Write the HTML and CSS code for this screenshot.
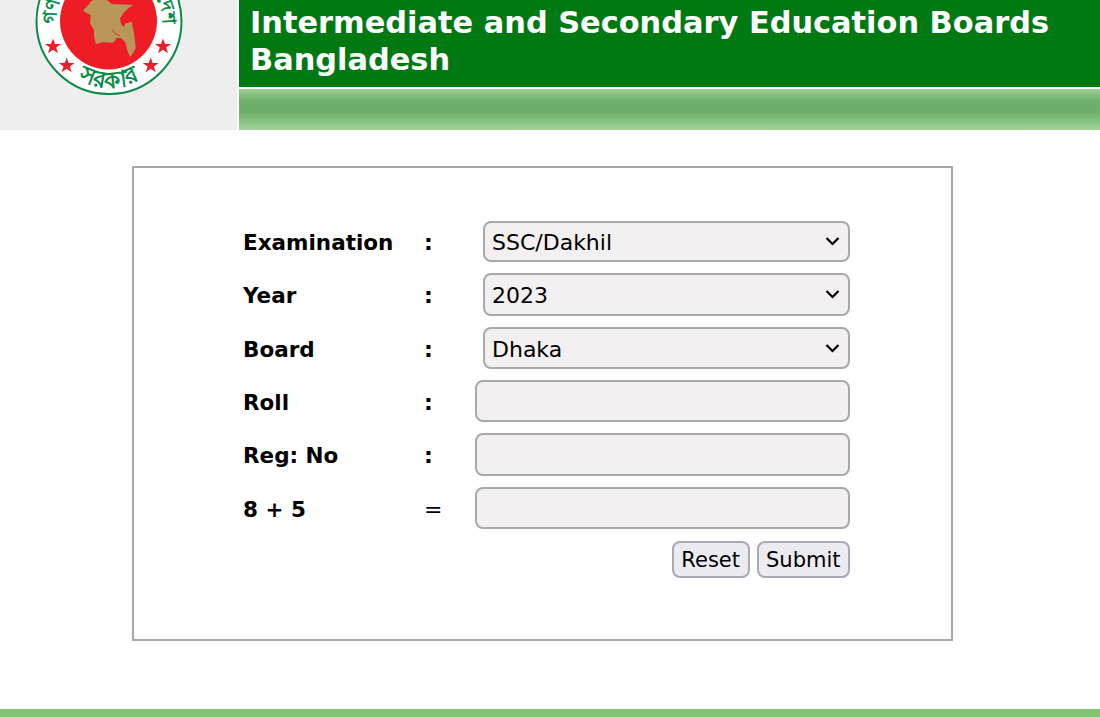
FILE: index.html
```html
<!DOCTYPE html>
<html lang="en">
<head>
<meta charset="utf-8">
<title>Education Board Results</title>
<link rel="stylesheet" href="styles.css">
</head>
<body>
<header class="masthead">
  <div class="brand">
    <svg class="logo" viewBox="0 0 148 96" width="148" height="96" aria-label="Government of Bangladesh seal">
      <circle cx="74" cy="21.500" r="72.500" fill="#fff" stroke="#0b8a4a" stroke-width="2"/>
      <circle cx="73.500" cy="21" r="48.500" fill="#ee1c25"/>
      <path fill="#b9975b" d="M48.300 10 L53.300 5 L55.700 1.700 L58 0 L71.700 0 L76.700 4 L98.300 5 L93.300 8.300 L88.300 13.300 L85 18.300 L86 24 L88.500 27 L91 23.300 L96.700 21.700 L99.300 35 L100.700 48.300 L96.700 55 L95 57 L92.300 50 L90 41.700 L86 38 L81.700 38 L78.300 42.700 L68.300 42.300 L61 44 L59 36.700 L59 30 L55 23.300 L55.700 15 L50 12.300 Z"/>
      <path class="seal-river" d="M76.700 29.300 L80 33.300 L85 36"/>
      <g fill="#e8202a">
        <polygon points="18,38.500 20,44.100 26,44.100 21.200,47.500 23,53.300 18,49.800 13,53.300 14.800,47.500 10,44.100 16,44.100"/>
        <polygon points="31.700,57.500 33.700,63.100 39.700,63.100 34.900,66.500 36.700,72.300 31.700,68.800 26.700,72.300 28.500,66.500 23.700,63.100 29.700,63.100"/>
        <polygon points="115.700,57.500 117.700,63.100 123.700,63.100 118.900,66.500 120.700,72.300 115.700,68.800 110.700,72.300 112.500,66.500 107.700,63.100 113.700,63.100"/>
        <polygon points="128,38.500 130,44.100 136,44.100 131.200,47.500 133,53.300 128,49.800 123,53.300 124.800,47.500 120,44.100 126,44.100"/>
      </g>
      <defs>
        <path id="arc-bottom" d="M30 70 A63 63 0 0 0 118 70"/>
        <path id="arc-top" d="M21 21.500 A53 53 0 1 1 127 21.500"/>
      </defs>
      <text class="seal-text seal-text-bottom"><textPath href="#arc-bottom" startOffset="50%" text-anchor="middle">সরকার</textPath></text>
      <text class="seal-text"><textPath href="#arc-top" startOffset="50%" text-anchor="middle">গণপ্রজাতন্ত্রী বাংলাদেশ</textPath></text>
    </svg>
  </div>
  <div class="banner">
    <h1 class="banner-title">Intermediate and Secondary Education Boards Bangladesh</h1>
    <div class="banner-strip"></div>
  </div>
</header>

<main class="content">
  <form class="result-form">
    <label class="field-label" for="exam">Examination</label>
    <span class="field-sep">:</span>
    <select class="field-select" id="exam"><option>SSC/Dakhil</option></select>

    <label class="field-label" for="year">Year</label>
    <span class="field-sep">:</span>
    <select class="field-select" id="year"><option>2023</option></select>

    <label class="field-label" for="board">Board</label>
    <span class="field-sep">:</span>
    <select class="field-select" id="board"><option>Dhaka</option></select>

    <label class="field-label" for="roll">Roll</label>
    <span class="field-sep">:</span>
    <input class="field-input" id="roll" type="text">

    <label class="field-label" for="reg">Reg: No</label>
    <span class="field-sep">:</span>
    <input class="field-input" id="reg" type="text">

    <label class="field-label" for="sum">8 + 5</label>
    <span class="field-sep field-sep-eq">=</span>
    <input class="field-input" id="sum" type="text">

    <div class="actions">
      <button class="action-btn" type="reset">Reset</button>
      <button class="action-btn" type="button">Submit</button>
    </div>
  </form>
</main>

<footer class="page-foot"></footer>
</body>
</html>
```
FILE: styles.css
```css
* { box-sizing: border-box; }

html, body {
  margin: 0;
  height: 717px;
  overflow: hidden;
  background: #fff;
}

body {
  display: flex;
  flex-direction: column;
  font-family: "DejaVu Sans", Verdana, sans-serif;
  color: #000;
}

.masthead {
  display: flex;
  height: 130px;
  gap: 2px;
}

.brand {
  width: 237px;
  background: #eeeeee;
  overflow: hidden;
  padding-left: 35px;
}

.logo { display: block; }

.seal-river {
  fill: none;
  stroke: #ee1c25;
  stroke-width: 0.800;
}

.seal-text {
  font-family: "Noto Sans", "DejaVu Sans", sans-serif;
  font-size: 19px;
  font-weight: 700;
  fill: #0b8a4a;
}

.seal-text-bottom { font-size: 23px; }

.banner {
  flex: 1;
  display: flex;
  flex-direction: column;
}

.banner-title {
  margin: 0;
  height: 87px;
  padding: 4px 10px 0 11px;
  background: #007913;
  color: #fff;
  font-size: 30.400px;
  line-height: 37px;
  font-weight: 700;
}

.banner-strip {
  height: 43px;
  border-top: 2px solid #fff;
  background: linear-gradient(to bottom, #9bcf94 0%, #6fb069 30%, #6cae66 55%, #a3d49b 100%);
}

.content {
  flex: 1;
  padding: 36px 147px 68px 132px;
}

.result-form {
  height: 475px;
  border: 2px solid #a8a8a8;
  padding: 53px 101px 0 109px;
  display: grid;
  grid-template-columns: 182px 50px 1fr;
  grid-template-rows: 41px 43px 42px 42px 43px 42px 37px;
  row-gap: 11px;
  align-items: center;
}

.field-label {
  padding-top: 2px;
  font-size: 21.500px;
  font-weight: 700;
}

.field-sep {
  padding-top: 2px;
  font-size: 22px;
  font-weight: 700;
  margin-left: -1px;
}

.field-sep-eq { font-weight: 400; }

.field-select,
.field-input {
  height: 100%;
  width: 100%;
  border: 2px solid #aaa8aa;
  border-radius: 8px;
  background-color: #f3f0f2;
  color: #000;
  font-family: "DejaVu Sans", sans-serif;
  font-size: 22px;
}

.field-select {
  appearance: none;
  margin-left: 8px;
  width: calc(100% - 8px);
  padding: 2px 7px 0;
  background-image: url("data:image/svg+xml,%3Csvg xmlns='http://www.w3.org/2000/svg' width='15' height='9'%3E%3Cpath d='M1.500 1 L7.500 7 L13.500 1' fill='none' stroke='%23000' stroke-width='2.200'/%3E%3C/svg%3E");
  background-repeat: no-repeat;
  background-position: right 8px center;
}

.actions {
  grid-column: 1 / -1;
  display: flex;
  justify-content: flex-end;
  gap: 7px;
  height: 100%;
  margin-top: 1px;
}

.action-btn {
  height: 37px;
  padding: 2px 7.500px 0;
  border: 2px solid #a9a9b5;
  border-radius: 8px;
  background: #ebebf1;
  color: #000;
  font-family: "DejaVu Sans", sans-serif;
  font-size: 21px;
}

.page-foot {
  height: 8px;
  background: #80c574;
}
```
